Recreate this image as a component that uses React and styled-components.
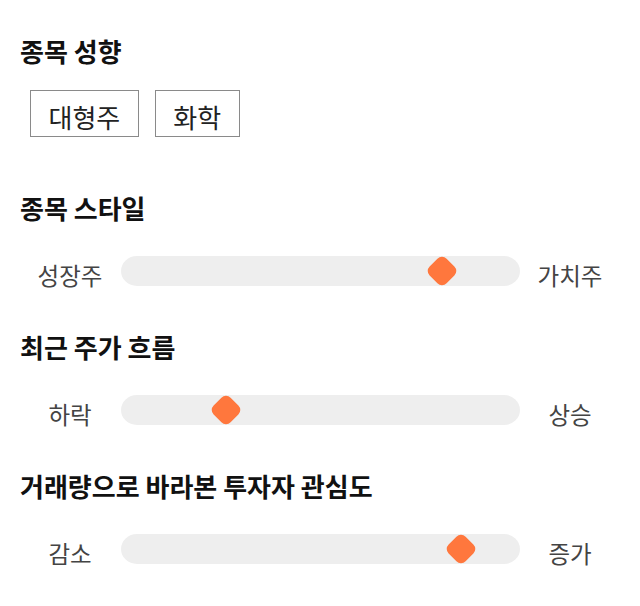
import React from 'react'
import styled, { createGlobalStyle } from 'styled-components'

const GlobalStyle = createGlobalStyle`
    body {
        margin: 0;
        background: #fff;
        font-family: "Noto Sans CJK KR", "Noto Sans", sans-serif;
    }
`

const Page = styled.div`
    width: 640px;
    padding-top: 36px;
`

const Section = styled.section`
    margin-bottom: ${props => props.$gap || 41}px;
`

const Title = styled.h2`
    margin: 0 0 ${props => props.$space || 28}px 20px;
    font-size: 26px;
    line-height: 30px;
    font-weight: 700;
    color: #111;
`

const ChipList = styled.div`
    display: flex;
    gap: 16px;
    padding-left: 30px;
`

const Chip = styled.span`
    box-sizing: border-box;
    height: 47px;
    padding: 6px 17.5px 0;
    display: flex;
    align-items: center;
    border: 1px solid #8a8a8a;
    font-size: 26px;
    color: #222;
`

const SliderRow = styled.div`
    display: grid;
    grid-template-columns: 100px 1fr 100px;
    align-items: center;
    height: 40px;
    padding: 0 20px 0 20px;
`

const SideLabel = styled.span`
    text-align: center;
    font-size: 23.5px;
    line-height: 30px;
    color: #444;
    margin-top: 8px;
`

const Track = styled.div`
    position: relative;
    height: 30px;
    margin-left: 1px;
    background: #eeeeee;
    border-radius: 16px / 15px;
`

// rounded diamond knob, sits over the track
const Knob = styled.div`
    position: absolute;
    top: 3px;
    width: 24px;
    height: 24px;
    margin-left: -12px;
    background: #ff773d;
    border-radius: 6.5px;
    transform: rotate(45deg);
`

const sliders = [
    { title: '종목 스타일', left: '성장주', right: '가치주', pos: 321 },
    { title: '최근 주가 흐름', left: '하락', right: '상승', pos: 105 },
    { title: '거래량으로 바라본 투자자 관심도', left: '감소', right: '증가', pos: 340 },
]

function Slider({ item }) {
    return (
        <SliderRow>
            <SideLabel>{item.left}</SideLabel>
            <Track>
                <Knob style={{ left: `${(item.pos / 399) * 100}%` }} />
            </Track>
            <SideLabel>{item.right}</SideLabel>
        </SliderRow>
    )
}

export default function App() {
    return (
        <Page>
            <GlobalStyle />
            <Section $gap={56}>
                <Title $space={24}>종목 성향</Title>
                <ChipList>
                    <Chip>대형주</Chip>
                    <Chip>화학</Chip>
                </ChipList>
            </Section>
            {sliders.map(item => (
                <Section key={item.title}>
                    <Title>{item.title}</Title>
                    <Slider item={item} />
                </Section>
            ))}
        </Page>
    )
}
